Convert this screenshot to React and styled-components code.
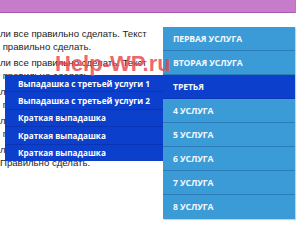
import React from 'react'
import styled, { createGlobalStyle } from 'styled-components'

const Global = createGlobalStyle`
  html, body {
    margin: 0;
    padding: 0;
    background: #fff;
  }
  body {
    width: 300px;
    height: 242px;
    overflow: hidden;
    font-family: "Liberation Sans", Arial, sans-serif;
  }
`

const Page = styled.div`
  position: relative;
  width: 300px;
  height: 242px;
  overflow: hidden;
`

const TopBar = styled.div`
  width: 295px;
  height: 12px;
  background: #c67bcb;
  border-bottom: 1px solid #a65aad;
  box-shadow: 1px 0 0 #9c8d9e;
`

const Content = styled.div`
  position: relative;
  display: flex;
  margin-top: 14px;
`

const Article = styled.div`
  width: 163px;
  flex-shrink: 0;
  overflow: hidden;
  color: #1c1c1c;
  font-size: 9.6px;
  line-height: 13px;
`

const Para = styled.p`
  margin: 0 0 3px 0;
  white-space: nowrap;
`

const Menu = styled.ul`
  list-style: none;
  margin: 0;
  padding: 0;
  width: 132px;
  box-shadow: 1px 1px 1px rgba(0, 0, 0, 0.18);
`

const Item = styled.li`
  position: relative;
  height: 23px;
  border-bottom: 1px solid ${p => (p.$active ? '#0a36b8' : '#2a7db8')};
  background: ${p => (p.$active ? '#0c3fcb' : '#3a9bd7')};
  display: flex;
  align-items: center;
  padding-left: 10px;
  color: #f2f8fd;
  font-family: "Open Sans", sans-serif;
  font-weight: 700;
  font-size: 8.6px;
  letter-spacing: -0.1px;
  text-transform: uppercase;

  &:last-child {
    border-bottom: none;
    height: 24px;
  }
`

const Dropdown = styled.ul`
  position: absolute;
  top: 0;
  right: 100%;
  width: 158px;
  list-style: none;
  margin: 0;
  padding: 0;
  background: #0c3fcb;
  z-index: 2;
`

const DropItem = styled.li`
  height: 16.4px;
  border-bottom: 1px solid #0935b4;
  display: flex;
  align-items: center;
  padding-left: 13px;
  color: #fff;
  font-family: "Open Sans", sans-serif;
  font-weight: 700;
  font-size: 8.2px;
  text-transform: none;
  letter-spacing: 0;
  white-space: nowrap;

  &:last-child {
    border-bottom: none;
  }
`

const Watermark = styled.span`
  position: absolute;
  left: 55px;
  top: 24px;
  line-height: 26px;
  font-family: "Liberation Sans", Arial, sans-serif;
  font-weight: 700;
  font-size: 22px;
  color: rgba(232, 70, 75, 0.82);
  z-index: 5;
  pointer-events: none;
  white-space: nowrap;
`

const paragraphs = [
  ['ли все правильно сделать. Текст', '\u00a0правильно сделать.'],
  ['ли все правильно сделать. Текст', '\u00a0правильно сделать.'],
  ['ли все правильно сделать. Текст', '\u00a0правильно сделать.'],
  ['ли все правильно сделать. Текст', '\u00a0правильно сделать.'],
  ['ли все правильно сделать. Текст', 'Правильно сделать.'],
]

const services = ['Первая услуга', 'Вторая услуга', 'Третья', '4 услуга', '5 услуга', '6 услуга', '7 услуга', '8 услуга']

const subItems = [
  'Выпадашка с третьей услуги 1',
  'Выпадашка с третьей услуги 2',
  'Краткая выпадашка',
  'Краткая выпадашка',
  'Краткая выпадашка',
]

export default function App() {
  return (
    <Page>
      <Global />
      <TopBar />
      <Content>
        <Article>
          {paragraphs.map((p, i) => (
            <Para key={i}>
              {p[0]}
              <br />
              {p[1]}
            </Para>
          ))}
        </Article>
        <Menu>
          {services.map((s, i) => (
            <Item key={i} $active={i === 2}>
              {s}
              {i === 2 && (
                <Dropdown>
                  {subItems.map((d, j) => (
                    <DropItem key={j}>{d}</DropItem>
                  ))}
                </Dropdown>
              )}
            </Item>
          ))}
        </Menu>
        <Watermark>Help-WP.ru</Watermark>
      </Content>
    </Page>
  )
}
